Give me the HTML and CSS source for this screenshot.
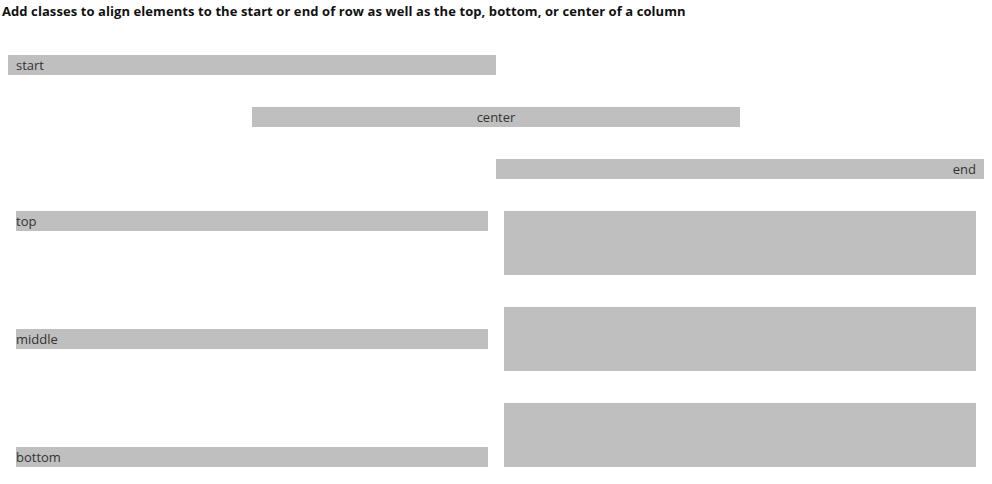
FILE: index.html
```html
<!DOCTYPE html>
<html>
<head>
<meta charset="utf-8">
<link rel="stylesheet" href="styles.css">
</head>
<body>
<h1 class="title">Add classes to align elements to the start or end of row as well as the top, bottom, or center of a column</h1>
<div class="demo">
  <div class="row row-start"><div class="col"><div class="box">start</div></div></div>
  <div class="row row-center"><div class="col"><div class="box text-center">center</div></div></div>
  <div class="row row-end"><div class="col"><div class="box text-end">end</div></div></div>
  <div class="row align-top">
    <div class="col padded"><div class="box flush">top</div></div>
    <div class="col padded"><div class="box tall"></div></div>
  </div>
  <div class="row align-middle">
    <div class="col padded"><div class="box flush">middle</div></div>
    <div class="col padded"><div class="box tall"></div></div>
  </div>
  <div class="row align-bottom">
    <div class="col padded"><div class="box flush">bottom</div></div>
    <div class="col padded"><div class="box tall"></div></div>
  </div>
</div>
</body>
</html>
```

FILE: styles.css
```css
html, body {
  margin: 0;
  padding: 0;
  background: #ffffff;
}
body {
  font-family: "Open Sans", "Noto Sans", sans-serif;
  color: #333333;
}
.title {
  margin: 0;
  padding: 2px 0 0 2px;
  font-size: 13px;
  font-weight: 700;
  line-height: 19px;
  color: #111111;
  letter-spacing: 0.08px;
}
.demo {
  display: flex;
  flex-direction: column;
  gap: 32px;
  padding: 34px 8px 0 8px;
}
.row {
  display: flex;
  width: 976px;
}
.row-center { justify-content: center; }
.row-end { justify-content: flex-end; }
.align-top { align-items: flex-start; }
.align-middle { align-items: center; }
.align-bottom { align-items: flex-end; }
.col {
  width: 50%;
  box-sizing: border-box;
}
.col.padded {
  padding: 0 8px;
}
.box {
  background: #bfbfbf;
  height: 20px;
  line-height: 21px;
  font-size: 13px;
  padding: 0 8px;
  color: #333333;
}
.box.flush { padding: 0; }
.box.tall { height: 64px; }
.text-center { text-align: center; }
.text-end { text-align: right; }
```
